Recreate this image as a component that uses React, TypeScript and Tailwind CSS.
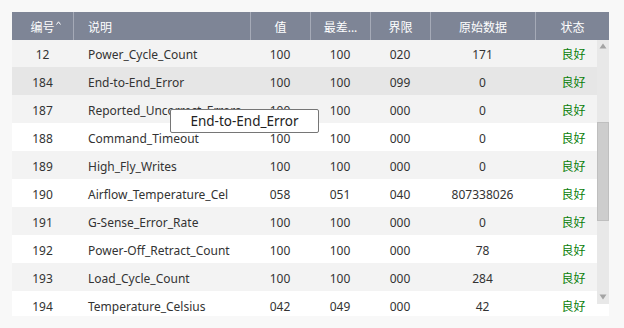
import React from "react";

type Row = {
  id: string;
  name: string;
  value: string;
  worst: string;
  thresh: string;
  raw: string;
};

const rows: Row[] = [
  { id: "12", name: "Power_Cycle_Count", value: "100", worst: "100", thresh: "020", raw: "171" },
  { id: "184", name: "End-to-End_Error", value: "100", worst: "100", thresh: "099", raw: "0" },
  { id: "187", name: "Reported_Uncorrect_Errors", value: "100", worst: "100", thresh: "000", raw: "0" },
  { id: "188", name: "Command_Timeout", value: "100", worst: "100", thresh: "000", raw: "0" },
  { id: "189", name: "High_Fly_Writes", value: "100", worst: "100", thresh: "000", raw: "0" },
  { id: "190", name: "Airflow_Temperature_Cel", value: "058", worst: "051", thresh: "040", raw: "807338026" },
  { id: "191", name: "G-Sense_Error_Rate", value: "100", worst: "100", thresh: "000", raw: "0" },
  { id: "192", name: "Power-Off_Retract_Count", value: "100", worst: "100", thresh: "000", raw: "78" },
  { id: "193", name: "Load_Cycle_Count", value: "100", worst: "100", thresh: "000", raw: "284" },
  { id: "194", name: "Temperature_Celsius", value: "042", worst: "049", thresh: "000", raw: "42" },
];

export default function App() {
  return (
    <div
      className="relative w-[624px] h-[328px] bg-[#f8f8f8] p-3 text-[12px] text-[#333]"
      style={{ fontFamily: '"Noto Sans", "Noto Sans CJK SC", sans-serif' }}
    >
      <div className="relative w-[597px]">
        {/* header */}
        <div className="flex h-[28px] bg-[#7e8596] text-white">
          <div className="w-[61px] flex items-center justify-center pt-[3px]">
            <span className="relative">
              编号
              <svg
                className="absolute -right-[6px] top-[2px]"
                width="5"
                height="4"
                viewBox="0 0 5 4"
              >
                <path d="M0.5 3.5 L2.5 0.8 L4.5 3.5" fill="none" stroke="white" strokeWidth="1" />
              </svg>
            </span>
          </div>
          <div className="w-[177px] flex items-center pl-[14px] pt-[3px] border-l border-[#a5aab7]">说明</div>
          <div className="w-[60px] flex items-center justify-center pt-[3px] border-l border-[#a5aab7]">值</div>
          <div className="w-[60px] flex items-center justify-center pt-[3px] border-l border-[#a5aab7]">最差...</div>
          <div className="w-[60px] flex items-center justify-center pt-[3px] border-l border-[#a5aab7]">界限</div>
          <div className="w-[105px] flex items-center justify-center pt-[3px] border-l border-[#a5aab7]">原始数据</div>
          <div className="w-[74px] flex items-center justify-center pt-[3px] border-l border-[#a5aab7]">状态</div>
        </div>

        {/* body */}
        <div className="relative h-[276px] overflow-hidden">
          <div className="-mt-px">
            {rows.map((r, i) => (
              <div
                key={r.id}
                className={`flex h-[28px] items-center pt-[4px] ${
                  i === 1 ? "bg-[#e6e6e6]" : i % 2 === 0 ? "bg-[#f3f3f3]" : "bg-white"
                }`}
              >
                <div className="w-[61px] text-center">{r.id}</div>
                <div className="w-[177px] pl-[15px] pr-1 truncate">{r.name}</div>
                <div className="w-[60px] text-center">{r.value}</div>
                <div className="w-[60px] text-center">{r.worst}</div>
                <div className="w-[60px] text-center">{r.thresh}</div>
                <div className="w-[105px] text-center">{r.raw}</div>
                <div className="w-[74px] text-center pl-[3px] text-[#0b800b]">良好</div>
              </div>
            ))}
          </div>

          {/* scrollbar */}
          <div className="absolute right-0 top-0 w-[12px] h-[264px] bg-[#e8e8e8]">
            <svg className="absolute left-[2px] top-[3px]" width="8" height="6" viewBox="0 0 8 6">
              <path d="M4 0.5 L7.5 5.5 L0.5 5.5 Z" fill="#a3a3a3" />
            </svg>
            <div className="absolute left-0 top-[82px] w-[12px] h-[99px] bg-[#cdcdcd] border border-[#bfbfbf]" />
            <svg className="absolute left-[2px] bottom-[4px]" width="8" height="6" viewBox="0 0 8 6">
              <path d="M0.5 0.5 L7.5 0.5 L4 5.5 Z" fill="#a3a3a3" />
            </svg>
          </div>
        </div>
      </div>

      {/* tooltip */}
      <div className="absolute left-[170px] top-[109px] w-[149px] h-[24px] bg-white border border-[#767676] rounded-[2px] flex items-center justify-center pt-[1px] text-[13.5px] text-[#222]">
        End-to-End_Error
      </div>
    </div>
  );
}
